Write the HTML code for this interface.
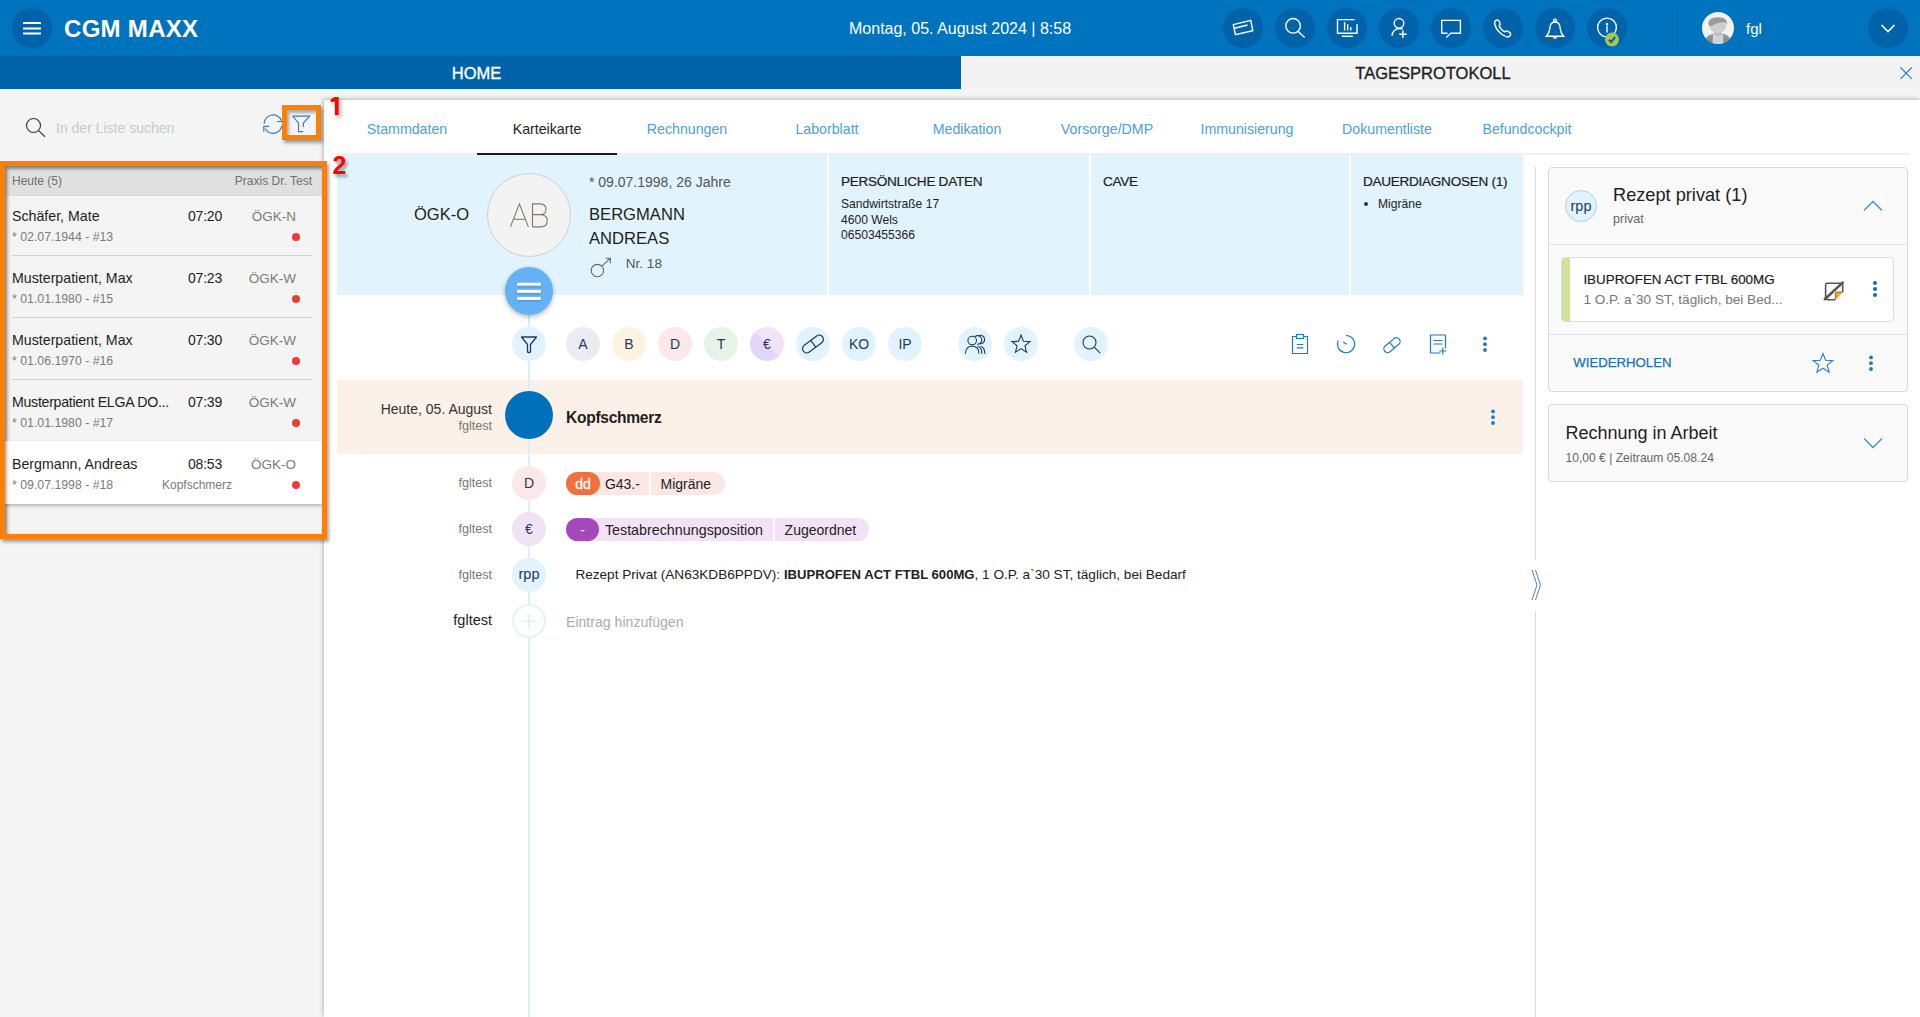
<!DOCTYPE html>
<html><head><meta charset="utf-8"><style>
*{box-sizing:border-box;margin:0;padding:0}
html,body{width:1920px;height:1017px;overflow:hidden}
body{position:relative;background:#f4f4f4;font-family:"Liberation Sans",sans-serif;color:#222}
.a{position:absolute}
.t{position:absolute;white-space:nowrap;line-height:1}
.hc{position:absolute;width:40px;height:40px;border-radius:50%;background:#0063a9;top:8px}
.hc svg{position:absolute;left:0;top:0}
</style></head><body>
<div class="a" style="left:0px;top:0px;width:1920px;height:56px;background:#0073be;"></div>
<div class="hc" style="left:12px"><svg width="40" height="40"><g fill="#fff"><rect x="11" y="14" width="18" height="2"/><rect x="11" y="19.5" width="18" height="2"/><rect x="11" y="24.5" width="18" height="2"/></g></svg></div>
<div class="t" style="top:16.58px;font-size:24px;color:#fff;font-weight:bold;left:64px;letter-spacing:0.3px;">CGM MAXX</div>
<div class="t" style="top:20.86px;font-size:16px;color:#fff;left:849px;">Montag, 05. August 2024 | 8:58</div>
<div class="hc" style="left:1223px"><svg width="40" height="40" fill="none" stroke="#fff" stroke-width="1.4"><path d="M10.3 16.6 L27.8 12.4 L29.8 22.8 L12.4 26.6 Z"/><path d="M11.6 20.3 L24.5 17"/></svg></div>
<div class="hc" style="left:1275px"><svg width="40" height="40" fill="none" stroke="#fff" stroke-width="1.4"><circle cx="18.1" cy="17.8" r="7.3"/><path d="M22.9 23.3 L29.6 29.5"/></svg></div>
<div class="hc" style="left:1327px"><svg width="40" height="40" fill="none" stroke="#fff" stroke-width="1.4"><path d="M27.6 11.6 H10.5 V25.3 H30 V16.2"/><path d="M14.7 28.3 H25.9"/><path d="M17.6 14 V22.4 M20.7 16.2 V22.4 M23.8 19 V22.4"/></svg></div>
<div class="hc" style="left:1379px"><svg width="40" height="40" fill="none" stroke="#fff" stroke-width="1.4"><circle cx="20" cy="15.3" r="4.8"/><path d="M13.1 27.8 C13.1 23.5 16.5 20.6 20.5 20.6 C21.8 20.6 23 20.8 23.9 21.2"/><path d="M23.9 22.5 V30 M20.2 26.2 H27.7"/></svg></div>
<div class="hc" style="left:1431px"><svg width="40" height="40" fill="none" stroke="#fff" stroke-width="1.4"><path d="M16.5 25.3 H10.7 V12.4 H29.4 V25.3 H19.8 L15.3 29.5"/></svg></div>
<div class="hc" style="left:1483px"><svg width="40" height="40" fill="none" stroke="#fff" stroke-width="1.4"><path d="M13.5 12.2 C11.8 12.8 11.3 14.5 11.8 16.5 C13 21.5 18 27 23 28.6 C25 29.2 27 28.6 27.5 27 C27.9 25.8 27.2 24.6 26 24 L24.3 23.2 C23.3 22.7 22.3 23 21.7 23.8 C19.2 22.6 17 20 16.2 17.7 C17 17.1 17.3 16 16.9 15 L16.2 13.2 C15.7 12.2 14.5 11.9 13.5 12.2 Z"/></svg></div>
<div class="hc" style="left:1535px"><svg width="40" height="40" fill="none" stroke="#fff" stroke-width="1.4"><circle cx="20" cy="12.6" r="1.4"/><path d="M20 14 C16 14 15 17 14.8 20.5 C14.6 24 13.5 26 11.4 28.2 H28.6 C26.5 26 25.4 24 25.2 20.5 C25 17 24 14 20 14 Z"/><path d="M18.3 28.4 A1.7 1.7 0 0 0 21.7 28.4"/></svg></div>
<div class="hc" style="left:1587px"><svg width="40" height="40" fill="none" stroke="#fff" stroke-width="1.4"><circle cx="20" cy="19.5" r="9.4"/><path d="M20 18 V24.5"/><circle cx="20" cy="16.3" r="0.6" fill="#fff"/><circle cx="25" cy="31.6" r="7" fill="#a6c94d" stroke="none"/><path d="M21.8 31.8 L24.2 34 L28.2 29.2" stroke="#0f5a9a" stroke-width="2"/></svg></div>
<div class="a" style="left:1677px;top:8px;width:1px;height:40px;background:#0062a4;"></div>
<div class="a" style="left:1702px;top:12px;width:32px;height:32px;border-radius:50%;background:#f2f2f2;overflow:hidden"><svg width="32" height="32"><defs><linearGradient id="sh" x1="0" y1="0" x2="0" y2="1"><stop offset="0" stop-color="#a0a0a0"/><stop offset="1" stop-color="#7d7d7d"/></linearGradient></defs><path d="M2 32 C3 25 7 22.5 12 21.6 H20 C25 22.5 29 25 30 32Z" fill="url(#sh)"/><path d="M10.3 32 L11.2 22 H20.8 L21.7 32Z" fill="#d2d2d2"/><path d="M12.3 19 H19.7 V22.8 Q16 24.6 12.3 22.8Z" fill="#bcbcbc"/><path d="M7.2 12.5 C7.2 17.5 10.5 20.8 16 20.8 C21.5 20.8 24.2 17.5 24.2 12.5 C24.2 9.5 22 8 16 8 C10 8 7.2 9.5 7.2 12.5Z" fill="#cecece"/><path d="M6.4 12.6 C5.8 8 9.5 5.3 16 5.3 C22.5 5.3 25.6 8 24.9 13 C24.5 11.5 23.8 10.6 22.8 10.3 C19 10.1 14 10.8 8.4 14.5 C7.5 14 6.8 13.4 6.4 12.6Z" fill="#9b9b9b"/></svg></div>
<div class="t" style="top:21.10px;font-size:15px;color:#fff;left:1746px;">fgl</div>
<div class="hc" style="left:1868px"><svg width="40" height="40" fill="none" stroke="#fff" stroke-width="1.6"><path d="M13.5 17 L20 23.5 L26.5 17"/></svg></div>
<div class="a" style="left:0px;top:56px;width:1920px;height:33px;background:#f2f2f2;"></div>
<div class="a" style="left:0px;top:56px;width:961px;height:33px;background:#0062a8;"></div>
<div class="t" style="top:64.78px;font-size:16.5px;color:#fff;left:76.5px;width:800px;text-align:center;-webkit-text-stroke:0.35px #fff;">HOME</div>
<div class="t" style="top:64.78px;font-size:16.5px;color:#222;left:1033px;width:800px;text-align:center;-webkit-text-stroke:0.35px #222;">TAGESPROTOKOLL</div>
<svg class="a" style="left:1898px;top:65px;" width="16" height="16" viewBox="0 0 16 16"><path d="M2.5 2.5 L13.8 13.8 M13.8 2.5 L2.5 13.8" stroke="#3a7cc0" stroke-width="1.2" fill="none"/></svg>
<div class="a" style="left:324px;top:100px;width:1596px;height:917px;background:#fff;box-shadow:-1px -1px 4px rgba(0,0,0,.25);"></div>
<div class="a" style="left:337px;top:153px;width:1573px;height:2px;background:#f0f0f0;"></div>
<div class="t" style="top:121.98px;font-size:14.2px;color:#4d9fd6;left:7px;width:800px;text-align:center;">Stammdaten</div>
<div class="t" style="top:121.98px;font-size:14.2px;color:#222;left:147px;width:800px;text-align:center;">Karteikarte</div>
<div class="t" style="top:121.98px;font-size:14.2px;color:#4d9fd6;left:287px;width:800px;text-align:center;">Rechnungen</div>
<div class="t" style="top:121.98px;font-size:14.2px;color:#4d9fd6;left:427px;width:800px;text-align:center;">Laborblatt</div>
<div class="t" style="top:121.98px;font-size:14.2px;color:#4d9fd6;left:567px;width:800px;text-align:center;">Medikation</div>
<div class="t" style="top:121.98px;font-size:14.2px;color:#4d9fd6;left:707px;width:800px;text-align:center;">Vorsorge/DMP</div>
<div class="t" style="top:121.98px;font-size:14.2px;color:#4d9fd6;left:847px;width:800px;text-align:center;">Immunisierung</div>
<div class="t" style="top:121.98px;font-size:14.2px;color:#4d9fd6;left:987px;width:800px;text-align:center;">Dokumentliste</div>
<div class="t" style="top:121.98px;font-size:14.2px;color:#4d9fd6;left:1127px;width:800px;text-align:center;">Befundcockpit</div>
<div class="a" style="left:477px;top:152.5px;width:140px;height:2.5px;background:#1c1c1c;"></div>
<div class="a" style="left:337px;top:155px;width:490px;height:140px;background:#e1f3fc;"></div>
<div class="a" style="left:829px;top:155px;width:260px;height:140px;background:#e1f3fc;"></div>
<div class="a" style="left:1091px;top:155px;width:258px;height:140px;background:#e1f3fc;"></div>
<div class="a" style="left:1351px;top:155px;width:172px;height:140px;background:#e1f3fc;"></div>
<div class="t" style="top:205.83px;font-size:16.5px;color:#222;right:1451px;text-align:right;">ÖGK-O</div>
<div class="a" style="left:487px;top:173px;width:84px;height:84px;border-radius:50%;background:#f3f3f3;border:1px solid #cfcfcf"></div>
<svg class="a" style="left:505px;top:200px;" width="50" height="30" viewBox="0 0 50 30"><g fill="none" stroke="#807670" stroke-width="1.1"><path d="M5.4 26.9 L14.4 3.9 L23.4 26.9 M8.6 19.2 H20.2"/><path d="M27.5 26.9 V3.9 H35 C39 3.9 41 6.3 41 9.4 C41 12.5 39 14.6 35 14.6 H27.5 M35 14.6 C39.6 14.6 42.3 17 42.3 20.7 C42.3 24.4 39.6 26.9 35 26.9 H27.5"/></g></svg>
<div class="t" style="top:174.75px;font-size:14px;color:#555;left:589px;">* 09.07.1998, 26 Jahre</div>
<div class="t" style="top:207.25px;font-size:16.6px;color:#1e1e1e;left:589px;">BERGMANN</div>
<div class="t" style="top:230.55px;font-size:16.6px;color:#1e1e1e;left:589px;">ANDREAS</div>
<svg class="a" style="left:588px;top:255px;" width="26" height="26" viewBox="0 0 26 26"><g fill="none" stroke="#666" stroke-width="1.1"><circle cx="9.4" cy="15.6" r="6.2"/><path d="M13.8 11.2 L22.4 3.2 M17.7 3.2 H22.4 V8.3"/></g></svg>
<div class="t" style="top:257.29px;font-size:13.6px;color:#555;left:625.7px;">Nr. 18</div>
<div class="t" style="top:175.49px;font-size:13.6px;color:#1e1e1e;left:841px;-webkit-text-stroke:0.2px #1e1e1e;letter-spacing:-0.3px;">PERSÖNLICHE DATEN</div>
<div class="t" style="top:197.76px;font-size:12.1px;color:#222;left:841px;">Sandwirtstraße 17</div>
<div class="t" style="top:213.66px;font-size:12.1px;color:#222;left:841px;">4600 Wels</div>
<div class="t" style="top:228.66px;font-size:12.1px;color:#222;left:841px;">06503455366</div>
<div class="t" style="top:175.49px;font-size:13.6px;color:#1e1e1e;left:1103px;-webkit-text-stroke:0.2px #1e1e1e;letter-spacing:-0.3px;">CAVE</div>
<div class="t" style="top:175.49px;font-size:13.6px;color:#1e1e1e;left:1363px;-webkit-text-stroke:0.2px #1e1e1e;letter-spacing:-0.3px;">DAUERDIAGNOSEN (1)</div>
<div class="a" style="left:1364px;top:202px;width:4px;height:4px;background:#333;border-radius:50%;"></div>
<div class="t" style="top:197.76px;font-size:12.1px;color:#222;left:1378px;">Migräne</div>
<div class="a" style="left:528px;top:295px;width:2px;height:722px;background:#dcf0fb;"></div>
<div class="a" style="left:505px;top:267px;width:48px;height:48px;border-radius:50%;background:#64b1f4;box-shadow:0 2px 5px rgba(0,0,0,.28)"></div>
<svg class="a" style="left:517px;top:282px;filter:drop-shadow(0 1px 1px rgba(0,0,0,.2));" width="24" height="19" viewBox="0 0 24 19"><g fill="#fff"><rect x="0" y="0.7" width="24" height="3"/><rect x="0" y="7.8" width="24" height="3"/><rect x="0" y="14.9" width="24" height="3"/></g></svg>
<div class="a" style="left:512.0px;top:327.0px;width:34px;height:34px;border-radius:50%;background:#e1f3fc;"></div>
<svg class="a" style="left:519px;top:334px;" width="20" height="20" viewBox="0 0 20 20"><path d="M2.5 3 H17.5 L11.5 10.5 V17.5 Q11.5 18.5 10.5 18.5 H9.5 Q8.5 18.5 8.5 17.5 V10.5 Z" fill="none" stroke="#1d3a5f" stroke-width="1.3" stroke-linejoin="round"/></svg>
<div class="a" style="left:566.0px;top:327.0px;width:34px;height:34px;border-radius:50%;background:#e9edf1;"></div>
<div class="t" style="top:337.25px;font-size:14px;color:#1d3a5f;left:183px;width:800px;text-align:center;">A</div>
<div class="a" style="left:612.0px;top:327.0px;width:34px;height:34px;border-radius:50%;background:#fff2e1;"></div>
<div class="t" style="top:337.25px;font-size:14px;color:#1d3a5f;left:229px;width:800px;text-align:center;">B</div>
<div class="a" style="left:658.0px;top:327.0px;width:34px;height:34px;border-radius:50%;background:#fce8e8;"></div>
<div class="t" style="top:337.25px;font-size:14px;color:#1d3a5f;left:275px;width:800px;text-align:center;">D</div>
<div class="a" style="left:704.0px;top:327.0px;width:34px;height:34px;border-radius:50%;background:#e6f4e8;"></div>
<div class="t" style="top:337.25px;font-size:14px;color:#1d3a5f;left:321px;width:800px;text-align:center;">T</div>
<div class="a" style="left:750.0px;top:327.0px;width:34px;height:34px;border-radius:50%;background:linear-gradient(45deg,#e2d7f9 0%,#e2d7f9 50%,#f0e4f6 50%,#f0e4f6 100%);"></div>
<div class="t" style="top:337.25px;font-size:14px;color:#1d3a5f;left:367px;width:800px;text-align:center;">€</div>
<div class="a" style="left:796.0px;top:327.0px;width:34px;height:34px;border-radius:50%;background:#e1f3fc;"></div>
<div class="a" style="left:842.0px;top:327.0px;width:34px;height:34px;border-radius:50%;background:#e1f3fc;"></div>
<div class="a" style="left:888.0px;top:327.0px;width:34px;height:34px;border-radius:50%;background:#e1f3fc;"></div>
<div class="a" style="left:958.0px;top:327.0px;width:34px;height:34px;border-radius:50%;background:#e1f3fc;"></div>
<div class="a" style="left:1004.0px;top:327.0px;width:34px;height:34px;border-radius:50%;background:#e1f3fc;"></div>
<div class="a" style="left:1074.0px;top:327.0px;width:34px;height:34px;border-radius:50%;background:#e1f3fc;"></div>
<svg class="a" style="left:797px;top:327.7px;" width="32" height="32" viewBox="0 0 32 32"><g fill="none" stroke="#1d3a5f" stroke-width="1.2" transform="translate(16 16) rotate(-37)"><path d="M-7.8 -4.2 H7.8 A4.2 4.2 0 0 1 7.8 4.2 H-7.8 A4.2 4.2 0 0 1 -7.8 -4.2 Z"/><path d="M0.3 -4.2 V4.2"/></g></svg>
<div class="t" style="top:337.25px;font-size:14px;color:#1d3a5f;left:459px;width:800px;text-align:center;">KO</div>
<div class="t" style="top:337.25px;font-size:14px;color:#1d3a5f;left:505px;width:800px;text-align:center;">IP</div>
<svg class="a" style="left:959px;top:328px;" width="32" height="32" viewBox="0 0 32 32"><g fill="none" stroke="#1d3a5f" stroke-width="1.1"><circle cx="13.2" cy="12.6" r="4.3"/><path d="M6.5 25.7 C6.5 20.3 9.5 18.2 13.2 18.2 C16.9 18.2 19.9 20.3 19.9 25.7"/><path d="M15.8 8.6 A4.3 4.3 0 1 1 18.2 16.2 M18.5 18.3 C21.3 18.9 22.8 21.5 22.8 25.7"/><path d="M19 7.9 A4.3 4.3 0 1 1 21 15.8 M21.5 18.2 C24.3 18.9 25.8 21.5 25.8 25.7"/></g></svg>
<svg class="a" style="left:1005px;top:328px;" width="32" height="32" viewBox="0 0 32 32"><path d="M16 7 L18.4 13.3 L25 13.6 L19.9 17.8 L21.6 24.3 L16 20.6 L10.4 24.3 L12.1 17.8 L7 13.6 L13.6 13.3 Z" fill="none" stroke="#1d3a5f" stroke-width="1.1" stroke-linejoin="miter"/></svg>
<svg class="a" style="left:1075px;top:328px;" width="32" height="32" viewBox="0 0 32 32"><g fill="none" stroke="#1d3a5f" stroke-width="1.1"><circle cx="14.5" cy="14.5" r="6.5"/><path d="M19.2 19.2 L25.2 25.2"/></g></svg>
<svg class="a" style="left:1288px;top:332px;" width="24" height="24" viewBox="0 0 24 24"><g fill="none" stroke="#1f79c7" stroke-width="1.2"><path d="M8.5 4.5 H4.5 V21.5 H19.5 V4.5 H15.5"/><rect x="8.5" y="2.5" width="7" height="4"/><path d="M8.7 12.5 H15.3 M8.7 15.8 H15.3"/></g></svg>
<svg class="a" style="left:1334px;top:332px;" width="24" height="24" viewBox="0 0 24 24"><g fill="none" stroke="#1f79c7" stroke-width="1.2"><path d="M12 3.5 A8.6 8.6 0 1 1 4.2 8.6"/><path d="M9.2 10.1 L12.6 12.3"/></g></svg>
<svg class="a" style="left:1380px;top:330.5px;" width="24" height="24" viewBox="0 0 24 24"><g fill="none" stroke="#1f79c7" stroke-width="1.2"><path d="M5.2 15 L14 7.6 A3.7 3.7 0 0 1 18.8 13.3 L10 20.7 A3.7 3.7 0 0 1 5.2 15 Z"/><path d="M9.6 11.3 L14.4 17"/></g></svg>
<svg class="a" style="left:1426px;top:332px;" width="24" height="24" viewBox="0 0 24 24"><g fill="none" stroke="#1f79c7" stroke-width="1.2"><path d="M14.5 21 H4.5 V3 H19.5 V16.5"/><path d="M7.5 8.5 H16.5 M7.5 12 H16.5"/><path d="M16.8 15.5 V22.5 M13.3 19 H20.3"/></g></svg>
<svg class="a" style="left:1479px;top:332px;" width="12" height="24" viewBox="0 0 12 24"><g fill="#1f79c7"><circle cx="6" cy="6.4" r="1.9"/><circle cx="6" cy="12.2" r="1.9"/><circle cx="6" cy="18" r="1.9"/></g></svg>
<div class="a" style="left:337px;top:380px;width:1186px;height:74px;background:#fcf1e8;"></div>
<div class="a" style="left:528px;top:380px;width:2px;height:74px;background:#dcf0fb;"></div>
<div class="a" style="left:505.0px;top:391.0px;width:48px;height:48px;border-radius:50%;background:#0070ba;"></div>
<div class="t" style="top:402.15px;font-size:14px;color:#333;right:1428px;text-align:right;">Heute, 05. August</div>
<div class="t" style="top:420.33px;font-size:12.6px;color:#777;right:1428px;text-align:right;">fgltest</div>
<div class="t" style="top:410.49px;font-size:15.6px;color:#1e1e1e;font-weight:bold;left:566px;letter-spacing:-0.3px;">Kopfschmerz</div>
<svg class="a" style="left:1487px;top:405px;" width="12" height="24" viewBox="0 0 12 24"><g fill="#1f79c7"><circle cx="6" cy="6.4" r="1.9"/><circle cx="6" cy="12.2" r="1.9"/><circle cx="6" cy="18" r="1.9"/></g></svg>
<div class="t" style="top:477.13px;font-size:12.6px;color:#777;right:1428px;text-align:right;">fgltest</div>
<div class="a" style="left:512.0px;top:466.0px;width:34px;height:34px;border-radius:50%;background:#fce8e8;"></div>
<div class="t" style="top:475.65px;font-size:14px;color:#1d3a5f;left:129px;width:800px;text-align:center;">D</div>
<div class="a" style="left:566px;top:472px;width:82.5px;height:23px;border-radius:11.5px 0 0 11.5px;background:#fce7e5"></div>
<div class="a" style="left:566px;top:472px;width:34px;height:23px;border-radius:11.5px;background:#f2703f"></div>
<div class="a" style="left:650.5px;top:472px;width:74.5px;height:23px;border-radius:0 11.5px 11.5px 0;background:#fce7e5"></div>
<div class="t" style="top:476.85px;font-size:14px;color:#fff;left:183px;width:800px;text-align:center;-webkit-text-stroke:0.3px #fff;">dd</div>
<div class="t" style="top:476.85px;font-size:14px;color:#222;left:604.9px;">G43.-</div>
<div class="t" style="top:476.85px;font-size:14px;color:#222;left:660.5px;">Migräne</div>
<div class="t" style="top:523.13px;font-size:12.6px;color:#777;right:1428px;text-align:right;">fgltest</div>
<div class="a" style="left:512.0px;top:512.0px;width:34px;height:34px;border-radius:50%;background:#f0e3f5;"></div>
<div class="t" style="top:521.65px;font-size:14px;color:#1d3a5f;left:129px;width:800px;text-align:center;">€</div>
<div class="a" style="left:566px;top:518px;width:206.5px;height:23px;border-radius:11.5px 0 0 11.5px;background:#f3e2f5"></div>
<div class="a" style="left:566px;top:518px;width:33px;height:23px;border-radius:11.5px;background:#a548bb"></div>
<div class="a" style="left:774.5px;top:518px;width:94px;height:23px;border-radius:0 11.5px 11.5px 0;background:#f3e2f5"></div>
<div class="t" style="top:522.85px;font-size:14px;color:#fff;left:182.5px;width:800px;text-align:center;">-</div>
<div class="t" style="top:522.60px;font-size:14.3px;color:#222;left:604.9px;">Testabrechnungsposition</div>
<div class="t" style="top:522.85px;font-size:14px;color:#222;left:784.6px;">Zugeordnet</div>
<div class="t" style="top:569.13px;font-size:12.6px;color:#777;right:1428px;text-align:right;">fgltest</div>
<div class="a" style="left:512.0px;top:558.0px;width:34px;height:34px;border-radius:50%;background:#e1f3fc;"></div>
<div class="t" style="top:567.23px;font-size:14.5px;color:#1d3a5f;left:129px;width:800px;text-align:center;">rpp</div>
<div class="t" style="top:568.29px;font-size:13.6px;color:#222;left:575.4px;">Rezept Privat (AN63KDB6PPDV): <b style="font-size:13.1px">IBUPROFEN ACT FTBL 600MG</b>, 1 O.P. a`30 ST, täglich, bei Bedarf</div>
<div class="t" style="top:613.03px;font-size:14.5px;color:#222;right:1428px;text-align:right;">fgltest</div>
<div class="a" style="left:512px;top:604px;width:34px;height:34px;border-radius:50%;background:#fff;border:2px solid #e1f3fc"></div>
<svg class="a" style="left:519px;top:611px;" width="20" height="20" viewBox="0 0 20 20"><path d="M10 3 V18 M3 10 H17" stroke="#dcf1fb" stroke-width="1.6"/></svg>
<div class="t" style="top:614.56px;font-size:14.1px;color:#ababab;left:566px;">Eintrag hinzufügen</div>
<div class="a" style="left:1535px;top:167px;width:1px;height:393px;background:#d9d9d9;"></div>
<div class="a" style="left:1535px;top:612px;width:1px;height:405px;background:#d9d9d9;"></div>
<svg class="a" style="left:1529px;top:566px;" width="16" height="40" viewBox="0 0 16 40"><g fill="none" stroke="#3f86cf" stroke-width="1"><path d="M3 4 L8 19 L3 34"/><path d="M6.5 4 L11.5 19 L6.5 34"/></g></svg>
<div class="a" style="left:1548px;top:167px;width:360px;height:225px;border:1px solid #d9d9d9;border-radius:4px;background:#fafafa"></div>
<div class="a" style="left:1565px;top:190px;width:32px;height:32px;border-radius:50%;background:#e1f3fc;border:1px solid #a7d5f0"></div>
<div class="t" style="top:198.73px;font-size:14.5px;color:#1d3a5f;left:1181px;width:800px;text-align:center;">rpp</div>
<div class="t" style="top:186.19px;font-size:18.2px;color:#1e1e1e;left:1613px;">Rezept privat (1)</div>
<div class="t" style="top:213.13px;font-size:12.6px;color:#666;left:1613px;">privat</div>
<svg class="a" style="left:1860px;top:195px;" width="26" height="20" viewBox="0 0 26 20"><path d="M4 15.5 L13 6.5 L22 15.5" fill="none" stroke="#3b8ed3" stroke-width="1.3"/></svg>
<div class="a" style="left:1549px;top:244px;width:358px;height:1px;background:#e2e2e2;"></div>
<div class="a" style="left:1561px;top:257px;width:333px;height:65px;border:1px solid #dcdcdc;border-radius:4px;background:#fff;overflow:hidden"><div class="a" style="left:0;top:0;width:8px;height:65px;background:#d3e29b"></div></div>
<div class="t" style="top:272.66px;font-size:13.4px;color:#1e1e1e;left:1583.4px;-webkit-text-stroke:0.2px #1e1e1e;">IBUPROFEN ACT FTBL 600MG</div>
<div class="t" style="top:293.49px;font-size:13.6px;color:#777;left:1583.4px;">1 O.P. a`30 ST, täglich, bei Bed...</div>
<svg class="a" style="left:1820px;top:278px;" width="28" height="26" viewBox="0 0 28 26"><path d="M15.4 21.7 H7.2 Q5.6 21.7 5.6 20.1 V6.9 Q5.6 5.3 7.2 5.3 H21.1 Q22.7 5.3 22.7 6.9 V14" fill="none" stroke="#555" stroke-width="1.6"/><path d="M15.4 14 H23 L15.4 22 Z" fill="#f5a614"/><path d="M15.4 21.5 V15.5 Q15.4 14 16.9 14 H22.7" fill="none" stroke="#555" stroke-width="0.8"/><path d="M4.8 21.2 L22.7 4.6" stroke="#555" stroke-width="2.6" stroke-linecap="round"/></svg>
<svg class="a" style="left:1869px;top:277px;" width="12" height="24" viewBox="0 0 12 24"><g fill="#0a6fc2"><circle cx="6" cy="6" r="2"/><circle cx="6" cy="12" r="2"/><circle cx="6" cy="18" r="2"/></g></svg>
<div class="a" style="left:1549px;top:334px;width:358px;height:1px;background:#e2e2e2;"></div>
<div class="t" style="top:356.43px;font-size:13.2px;color:#1a6fb7;left:1573.3px;-webkit-text-stroke:0.25px #1a6fb7;">WIEDERHOLEN</div>
<svg class="a" style="left:1810px;top:350px;" width="26" height="26" viewBox="0 0 26 26"><path d="M13 3.5 L15.6 10.3 L22.8 10.6 L17.2 15.2 L19.1 22.2 L13 18.2 L6.9 22.2 L8.8 15.2 L3.2 10.6 L10.4 10.3 Z" fill="none" stroke="#2b7fcb" stroke-width="1.1"/></svg>
<svg class="a" style="left:1865px;top:351px;" width="12" height="24" viewBox="0 0 12 24"><g fill="#1f79c7"><circle cx="6" cy="6.4" r="1.9"/><circle cx="6" cy="12.2" r="1.9"/><circle cx="6" cy="18" r="1.9"/></g></svg>
<div class="a" style="left:1548px;top:404px;width:360px;height:78px;border:1px solid #d9d9d9;border-radius:4px;background:#fafafa"></div>
<div class="t" style="top:423.76px;font-size:18px;color:#1e1e1e;left:1565.5px;">Rechnung in Arbeit</div>
<div class="t" style="top:451.56px;font-size:12.1px;color:#666;left:1565.5px;">10,00 € | Zeitraum 05.08.24</div>
<svg class="a" style="left:1860px;top:434px;" width="26" height="20" viewBox="0 0 26 20"><path d="M4 4.5 L13 13.5 L22 4.5" fill="none" stroke="#3b8ed3" stroke-width="1.3"/></svg>
<svg class="a" style="left:24px;top:116px;" width="24" height="24" viewBox="0 0 24 24"><circle cx="9.5" cy="9.5" r="7" fill="none" stroke="#3a3a3a" stroke-width="1.2"/><path d="M14.6 14.6 L21 20.7" stroke="#3a3a3a" stroke-width="1.2"/></svg>
<div class="t" style="top:120.75px;font-size:14px;color:#c9c9c9;left:56px;">In der Liste suchen</div>
<svg class="a" style="left:255px;top:92px;" width="30" height="45" viewBox="0 0 30 45"><g fill="none" stroke="#2f7fcc" stroke-width="1.15"><path d="M9.2 31.8 A8.9 8.9 0 0 1 26.4 28.5"/><path d="M22.1 29.5 H27.5"/><path d="M26.8 33.9 A8.9 8.9 0 0 1 10.2 36.6"/><path d="M14.3 34.4 H8.8 V39.8"/></g></svg>
<svg class="a" style="left:285px;top:110px;" width="30" height="30" viewBox="0 0 30 30"><path d="M7.6 6.1 H24.6 L18.4 13 V16.9 M7.6 6.1 L13.5 13 V21.6 H18.2" fill="none" stroke="#2f7fcc" stroke-width="1.15"/></svg>
<div class="a" style="left:282px;top:105px;width:39px;height:35px;border:5px solid #ff7f00;box-shadow:2px 3px 3px rgba(0,0,0,.35)"></div>
<div class="a" style="left:287px;top:110px;width:29px;height:25px;box-shadow:inset 2px 3px 3px rgba(0,0,0,.3)"></div>
<svg class="a" style="left:325px;top:92px;filter:drop-shadow(2px 3px 2px rgba(0,0,0,.35));" width="20" height="30" viewBox="0 0 20 30"><path d="M9.3 4.9 H13.6 V22.9 H9.9 V9.5 L5.7 10.3 V7.6 Z" fill="#ff0000"/></svg>
<div class="a" style="left:5px;top:166px;width:317px;height:368px;background:#f4f4f4;box-shadow:inset 2px 2px 4px rgba(0,0,0,.25)"></div>
<div class="a" style="left:5px;top:166px;width:317px;height:30px;background:#e0e0e0;box-shadow:inset 2px 2px 4px rgba(0,0,0,.2);"></div>
<div class="t" style="top:175.24px;font-size:12px;color:#707070;left:12px;">Heute (5)</div>
<div class="t" style="top:175.24px;font-size:12px;color:#707070;right:1608px;text-align:right;">Praxis Dr. Test</div>
<div class="t" style="top:209.18px;font-size:14.2px;color:#1e1e1e;left:12px;">Schäfer, Mate</div>
<div class="t" style="top:209.35px;font-size:14px;color:#1e1e1e;right:1698px;text-align:right;letter-spacing:-0.2px;">07:20</div>
<div class="t" style="top:209.77px;font-size:13.5px;color:#7a7a7a;right:1624px;text-align:right;">ÖGK-N</div>
<div class="t" style="top:231.19px;font-size:12.3px;color:#7a7a7a;left:12px;">* 02.07.1944 - #13</div>
<div class="a" style="left:291.5px;top:233.0px;width:8px;height:8px;background:#ef3b36;border-radius:50%;"></div>
<div class="a" style="left:12px;top:255px;width:300px;height:1px;background:#d2d2d2;"></div>
<div class="t" style="top:271.18px;font-size:14.2px;color:#1e1e1e;left:12px;">Musterpatient, Max</div>
<div class="t" style="top:271.35px;font-size:14px;color:#1e1e1e;right:1698px;text-align:right;letter-spacing:-0.2px;">07:23</div>
<div class="t" style="top:271.77px;font-size:13.5px;color:#7a7a7a;right:1624px;text-align:right;">ÖGK-W</div>
<div class="t" style="top:293.19px;font-size:12.3px;color:#7a7a7a;left:12px;">* 01.01.1980 - #15</div>
<div class="a" style="left:291.5px;top:295.0px;width:8px;height:8px;background:#ef3b36;border-radius:50%;"></div>
<div class="a" style="left:12px;top:317px;width:300px;height:1px;background:#d2d2d2;"></div>
<div class="t" style="top:333.18px;font-size:14.2px;color:#1e1e1e;left:12px;">Musterpatient, Max</div>
<div class="t" style="top:333.35px;font-size:14px;color:#1e1e1e;right:1698px;text-align:right;letter-spacing:-0.2px;">07:30</div>
<div class="t" style="top:333.77px;font-size:13.5px;color:#7a7a7a;right:1624px;text-align:right;">ÖGK-W</div>
<div class="t" style="top:355.19px;font-size:12.3px;color:#7a7a7a;left:12px;">* 01.06.1970 - #16</div>
<div class="a" style="left:291.5px;top:357.0px;width:8px;height:8px;background:#ef3b36;border-radius:50%;"></div>
<div class="a" style="left:12px;top:379px;width:300px;height:1px;background:#d2d2d2;"></div>
<div class="t" style="top:395.18px;font-size:14.2px;color:#1e1e1e;left:12px;letter-spacing:-0.3px;">Musterpatient ELGA DO...</div>
<div class="t" style="top:395.35px;font-size:14px;color:#1e1e1e;right:1698px;text-align:right;letter-spacing:-0.2px;">07:39</div>
<div class="t" style="top:395.77px;font-size:13.5px;color:#7a7a7a;right:1624px;text-align:right;">ÖGK-W</div>
<div class="t" style="top:417.19px;font-size:12.3px;color:#7a7a7a;left:12px;">* 01.01.1980 - #17</div>
<div class="a" style="left:291.5px;top:419.0px;width:8px;height:8px;background:#ef3b36;border-radius:50%;"></div>
<div class="a" style="left:5px;top:441px;width:317px;height:63px;background:#fff;box-shadow:0 2px 3px rgba(0,0,0,.25);"></div>
<div class="t" style="top:457.18px;font-size:14.2px;color:#1e1e1e;left:12px;">Bergmann, Andreas</div>
<div class="t" style="top:457.35px;font-size:14px;color:#1e1e1e;right:1698px;text-align:right;letter-spacing:-0.2px;">08:53</div>
<div class="t" style="top:457.77px;font-size:13.5px;color:#7a7a7a;right:1624px;text-align:right;">ÖGK-O</div>
<div class="t" style="top:479.19px;font-size:12.3px;color:#7a7a7a;left:12px;">* 09.07.1998 - #18</div>
<div class="t" style="top:479.44px;font-size:12px;color:#7a7a7a;left:162px;">Kopfschmerz</div>
<div class="a" style="left:291.5px;top:481.0px;width:8px;height:8px;background:#ef3b36;border-radius:50%;"></div>
<div class="a" style="left:0px;top:161px;width:327px;height:378px;border:5px solid #ff7f00;box-shadow:2px 3px 3px rgba(0,0,0,.35)"></div>
<div class="a" style="left:5px;top:166px;width:317px;height:368px;box-shadow:inset 2px 3px 3px rgba(0,0,0,.3)"></div>
<div class="t" style="top:152.74px;font-size:25px;color:#ff0000;font-weight:bold;left:332.5px;text-shadow:2px 3px 3px rgba(0,0,0,.35);">2</div>
</body></html>
